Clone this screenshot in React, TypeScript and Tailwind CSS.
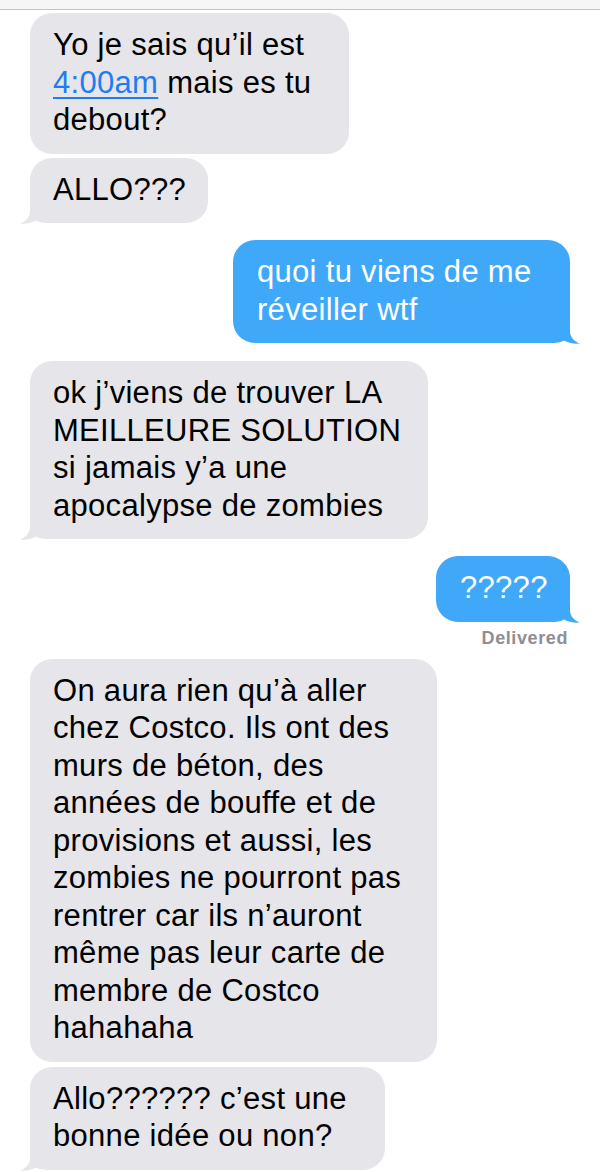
import { ReactNode } from 'react'

const GRAY = '#e5e5ea'
const BLUE = '#3fa8f8'

interface BubbleProps {
  width: number
  tail?: boolean
  children: ReactNode
}

const ReceivedTail = () => (
  <svg
    className="absolute -left-[10px] -bottom-[1px]"
    width="30"
    height="21"
    viewBox="0 0 30 21"
  >
    <path
      d="M10 0 L10 8 C10 14 6 18.5 0 20.5 C6 21 12 20 16 17.5 C19 19.5 24 20 30 20 L30 0 Z"
      fill={GRAY}
    />
  </svg>
)

const SentTail = () => (
  <svg
    className="absolute -right-[10px] -bottom-[1px]"
    width="30"
    height="21"
    viewBox="0 0 30 21"
  >
    <path
      d="M20 0 L20 8 C20 14 24 18.5 30 20.5 C24 21 18 20 14 17.5 C11 19.5 6 20 0 20 L0 0 Z"
      fill={BLUE}
    />
  </svg>
)

const Received = ({ width, tail, children }: BubbleProps) => (
  <div
    className="relative ml-[30px] rounded-[22px] bg-[#e5e5ea] pt-[13px] pb-[15px] pl-[23px] text-black whitespace-nowrap"
    style={{ width }}
  >
    {tail && <ReceivedTail />}
    <div className="relative">{children}</div>
  </div>
)

const Sent = ({ width, tail, children }: BubbleProps) => (
  <div
    className="relative mr-[30px] self-end rounded-[22px] bg-[#3fa8f8] pt-[13px] pb-[15px] pl-[24px] text-white whitespace-nowrap"
    style={{ width }}
  >
    {tail && <SentTail />}
    <div className="relative">{children}</div>
  </div>
)

const App = () => {
  return (
    <div
      className="flex h-[1172px] w-[600px] flex-col overflow-hidden bg-white text-[31px] leading-[37.5px] tracking-[0.3px]"
      style={{ fontFamily: '"Liberation Sans", Arial, sans-serif' }}
    >
      <div className="h-[10px] shrink-0 border-b border-[#c4c4c4] bg-[#f6f6f6]" />

      <div className="mt-[3px] flex flex-col">
        <div className="flex flex-col gap-[4px]">
          <Received width={319}>
            Yo je sais qu’il est
            <br />
            <span className="text-[#1f7cf3] underline decoration-[2px] underline-offset-[4px]">
              4:00am
            </span>{' '}
            mais es tu
            <br />
            debout?
          </Received>
          <Received width={178} tail>
            ALLO???
          </Received>
        </div>

        <div className="mt-[17px] flex flex-col">
          <Sent width={337} tail>
            quoi tu viens de me
            <br />
            réveiller wtf
          </Sent>
        </div>

        <div className="mt-[18px] flex flex-col">
          <Received width={398} tail>
            ok j’viens de trouver LA
            <br />
            MEILLEURE SOLUTION
            <br />
            si jamais y’a une
            <br />
            apocalypse de zombies
          </Received>
        </div>

        <div className="mt-[17px] flex flex-col">
          <Sent width={134} tail>
            ?????
          </Sent>
          <div className="mr-[32px] mt-[5px] self-end text-[18px] leading-[22px] font-bold tracking-[0.6px] text-[#8e8e93]">
            Delivered
          </div>
        </div>

        <div className="mt-[10px] flex flex-col gap-[5px]">
          <Received width={407}>
            On aura rien qu’à aller
            <br />
            chez Costco. Ils ont des
            <br />
            murs de béton, des
            <br />
            années de bouffe et de
            <br />
            provisions et aussi, les
            <br />
            zombies ne pourront pas
            <br />
            rentrer car ils n’auront
            <br />
            même pas leur carte de
            <br />
            membre de Costco
            <br />
            hahahaha
          </Received>
          <Received width={355} tail>
            Allo?????? c’est une
            <br />
            bonne idée ou non?
          </Received>
        </div>
      </div>
    </div>
  )
}

export default App
